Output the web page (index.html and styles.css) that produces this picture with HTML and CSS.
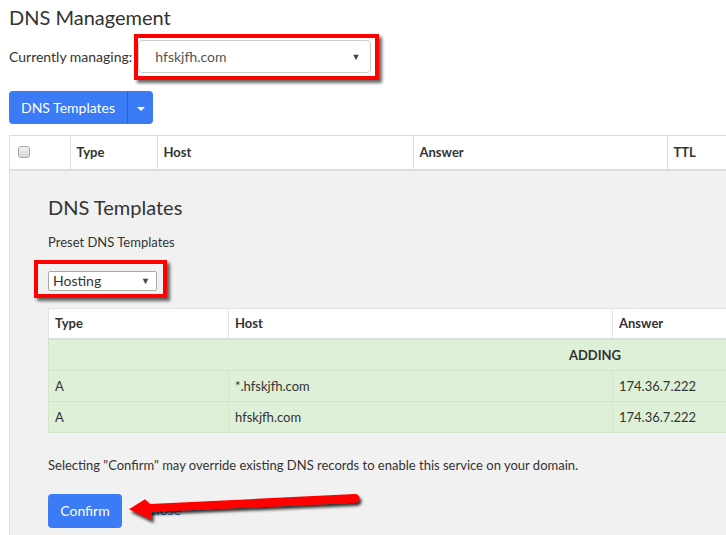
FILE: index.html
```html
<!DOCTYPE html>
<html lang="en">
<head>
  <meta charset="UTF-8" />
  <title>DNS Management</title>
  <link rel="stylesheet" href="styles.css">
</head>
<body>

  <h1 class="page-title">DNS Management</h1>

  <div class="managing">
    <span class="managing-label">Currently managing:</span>
    <div class="marked marked-domain">
      <div class="fake-select domain-select">
        <span>hfskjfh.com</span>
        <span class="caret">&#9660;</span>
      </div>
    </div>
  </div>

  <div class="btn-group">
    <button class="btn btn-main">DNS Templates</button>
    <button class="btn btn-toggle"><span class="btn-caret"></span></button>
  </div>

  <div class="records">
    <table class="records-head">
      <colgroup>
        <col style="width:60px"><col style="width:87px"><col style="width:256px"><col style="width:254px"><col>
      </colgroup>
      <tr>
        <th><span class="checkbox"></span></th>
        <th>Type</th>
        <th>Host</th>
        <th>Answer</th>
        <th>TTL</th>
      </tr>
    </table>

    <div class="templates">
      <h2 class="templates-title">DNS Templates</h2>
      <p class="templates-label">Preset DNS Templates</p>

      <div class="marked marked-preset">
        <div class="fake-select preset-select">
          <span>Hosting</span>
          <span class="caret">&#9660;</span>
        </div>
      </div>

      <table class="preview">
        <colgroup>
          <col style="width:180px"><col style="width:384px"><col>
        </colgroup>
        <tr class="preview-head">
          <th>Type</th>
          <th>Host</th>
          <th>Answer</th>
        </tr>
        <tr class="adding">
          <td colspan="3">ADDING</td>
        </tr>
        <tr class="adding">
          <td>A</td>
          <td>*.hfskjfh.com</td>
          <td>174.36.7.222</td>
        </tr>
        <tr class="adding">
          <td>A</td>
          <td>hfskjfh.com</td>
          <td>174.36.7.222</td>
        </tr>
      </table>

      <p class="notice">Selecting "Confirm" may override existing DNS records to enable this service on your domain.</p>

      <div class="actions">
        <button class="btn btn-confirm">Confirm</button>
        <a class="close-link" href="#">Close</a>
        <!-- annotation arrow -->
        <svg class="arrow" width="250" height="45" viewBox="0 0 250 45">
          <defs>
            <filter id="arrowShadow" x="-10%" y="-30%" width="130%" height="180%">
              <feDropShadow dx="2" dy="3" stdDeviation="1.4" flood-color="#000" flood-opacity="0.8"/>
            </filter>
          </defs>
          <path d="M11 23.3 L27 13.3 L32 18 L237 8 A4.4 4.4 0 0 1 237.4 16.8 L33.5 25.8 L33.7 34 Z" fill="#ff0000" filter="url(#arrowShadow)"/>
        </svg>
      </div>
    </div>
  </div>

</body>
</html>
```

FILE: styles.css
```css
* { box-sizing: border-box; }
html, body { overflow: hidden; }
body {
  margin: 0;
  padding: 5px 0 0 9px;
  font-family: Lato, "Open Sans", sans-serif;
  color: #333;
  background: #fff;
}
.page-title {
  margin: 0;
  font-size: 20px;
  font-weight: 400;
  line-height: 24px;
}
.managing {
  display: flex;
  align-items: center;
  margin-top: 11px;
}
.managing-label {
  font-size: 14px;
  margin-right: 6px;
}
.marked {
  position: relative;
}
.marked::after {
  content: "";
  position: absolute;
  border: 4px solid #ff0000;
  box-shadow: 3px 3px 3px rgba(0,0,0,0.6);
}
.marked-domain::after {
  top: -6px; right: -8px; bottom: -7px; left: -4px;
}
.marked-preset {
  display: inline-block;
  margin-top: 20px;
}
.marked-preset::after {
  top: -11px; right: -10px; bottom: -7px; left: -14px;
}
.fake-select {
  display: flex;
  align-items: center;
  justify-content: space-between;
  background: #fff;
}
.domain-select {
  width: 233px;
  height: 33px;
  padding: 0 10px 0 16px;
  border: 1px solid #ccc;
  border-radius: 4px;
  font-size: 14px;
  color: #555;
}
.preset-select {
  width: 109px;
  height: 20px;
  padding: 0 6px 0 4px;
  border: 1px solid #aaa;
  border-radius: 2px;
  font-size: 14px;
  color: #333;
}
.caret {
  font-size: 9px;
  color: #444;
}
.btn {
  font-family: inherit;
  border: none;
  color: #fff;
  background: #3b7bf5;
  cursor: pointer;
}
.btn-group {
  display: flex;
  margin-top: 18px;
}
.btn-main {
  width: 119px;
  height: 33px;
  font-size: 14px;
  border-radius: 4px 0 0 4px;
  border-right: 1px solid #2c63cf;
}
.btn-toggle {
  width: 25px;
  height: 33px;
  border-radius: 0 4px 4px 0;
  padding: 0;
}
.btn-caret {
  display: inline-block;
  border-left: 4px solid transparent;
  border-right: 4px solid transparent;
  border-top: 4px solid #fff;
  vertical-align: middle;
}
.records {
  width: 1170px;
  margin-top: 11px;
  border-left: 1px solid #ddd;
}
.records-head {
  width: 100%;
  table-layout: fixed;
  border-collapse: collapse;
}
.records-head th {
  height: 34px;
  padding: 0 6px;
  text-align: left;
  font-size: 13px;
  font-weight: 700;
  border-top: 1px solid #ddd;
  border-left: 1px solid #ddd;
  border-bottom: 2px solid #ddd;
}
.records-head th:first-child {
  border-left: none;
  padding-left: 8px;
}
.checkbox {
  display: block;
  width: 12px;
  height: 12px;
  border: 1px solid #aaa;
  border-radius: 3px;
  background: linear-gradient(#f2f2f2, #d6d6d6);
}
.templates {
  background: #f1f1f1;
  padding: 24px 38px 40px 38px;
  height: 400px;
}
.templates-title {
  margin: 0;
  font-size: 20px;
  font-weight: 400;
  line-height: 24px;
}
.templates-label {
  margin: 14px 0 0;
  font-size: 13px;
  line-height: 18px;
}
.preview {
  width: 1094px;
  margin-top: 17px;
  table-layout: fixed;
  border-collapse: collapse;
  font-size: 13px;
}
.preview th, .preview td {
  height: 31px;
  padding: 0 6px;
  text-align: left;
}
.preview-head th {
  background: #fff;
  font-weight: 700;
  border: 1px solid #e2e2e2;
  border-bottom: 2px solid #ddd;
}
.adding td {
  background: #dff0d8;
  border: 1px solid #d3e4cb;
}
.adding td[colspan] {
  text-align: center;
  font-weight: 700;
}
.notice {
  margin: 23px 0 0;
  font-size: 13px;
  line-height: 18px;
}
.actions {
  position: relative;
  display: flex;
  align-items: center;
  margin-top: 20px;
}
.btn-confirm {
  width: 74px;
  height: 34px;
  font-size: 14px;
  border-radius: 4px;
}
.close-link {
  margin-left: 25px;
  margin-top: -2px;
  font-size: 14px;
  color: #2b5cb8;
  text-decoration: none;
}
.arrow {
  position: absolute;
  left: 70px;
  top: -8px;
}
```
